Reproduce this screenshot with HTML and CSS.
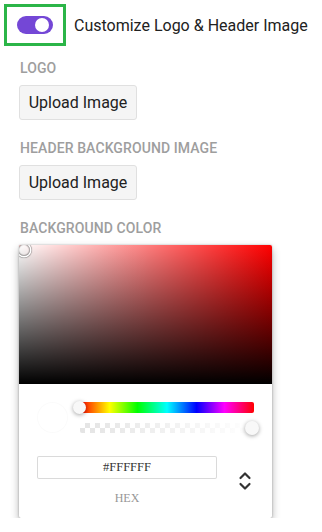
FILE: index.html
```html
<!DOCTYPE html>
<html lang="en">
<head>
    <meta charset="UTF-8">
    <meta name="viewport" content="width=device-width, initial-scale=1.0">
    <title>Customize Logo</title>
    <link rel="stylesheet" href="styles.css">
</head>
<body>
    <div class="header">
        <div class="toggle-box">
            <div class="switch"><span class="knob"></span></div>
        </div>
        <span class="title">Customize Logo &amp; Header Image</span>
    </div>

    <div class="section">
        <div class="label">Logo</div>
        <button class="upload">Upload Image</button>

        <div class="label">Header Background Image</div>
        <button class="upload">Upload Image</button>

        <div class="label">Background Color</div>

        <div class="picker">
            <div class="sat">
                <div class="sat-white"></div>
                <div class="sat-black"></div>
                <div class="sat-pointer"></div>
            </div>
            <div class="picker-body">
                <div class="controls">
                    <div class="swatch-wrap"><div class="swatch"></div></div>
                    <div class="sliders">
                        <div class="hue"><span class="slider-pointer hue-pointer"></span></div>
                        <div class="alpha"><span class="slider-pointer alpha-pointer"></span></div>
                    </div>
                </div>
                <div class="fields">
                    <div class="field">
                        <input class="hex-input" type="text" value="#FFFFFF">
                        <div class="hex-label">hex</div>
                    </div>
                    <div class="field-toggle">
                        <svg width="14" height="22" viewBox="0 0 14 22">
                            <path d="M2.5 8 L7 3.5 L11.5 8" fill="none" stroke="#333" stroke-width="2.2" stroke-linecap="round" stroke-linejoin="round"/>
                            <path d="M2.5 14 L7 18.5 L11.5 14" fill="none" stroke="#333" stroke-width="2.2" stroke-linecap="round" stroke-linejoin="round"/>
                        </svg>
                    </div>
                </div>
            </div>
        </div>
    </div>
</body>
</html>
```

FILE: styles.css
```css
body {
    margin: 0;
    font-family: Roboto, "Liberation Sans", sans-serif;
    background-color: #ffffff;
    color: #212121;
}
.header {
    display: flex;
    align-items: center;
    padding: 4px 0 0 4px;
}
.toggle-box {
    width: 62px;
    height: 42px;
    box-sizing: border-box;
    border: 3px solid #2bb548;
    display: flex;
    align-items: center;
    justify-content: center;
}
.switch {
    position: relative;
    width: 36px;
    height: 18px;
    border-radius: 9px;
    background-color: #7447d6;
}
.knob {
    position: absolute;
    top: 2px;
    right: 4px;
    width: 14px;
    height: 14px;
    border-radius: 50%;
    background-color: #ffffff;
}
.title {
    margin-left: 8px;
    font-size: 16px;
}
.section {
    padding-left: 19px;
}
.label {
    margin-top: 20px;
    margin-bottom: 9px;
    padding-left: 1px;
    font-size: 14px;
    line-height: 16px;
    font-weight: 500;
    color: #9e9e9e;
    text-transform: uppercase;
    letter-spacing: 0.1px;
}
.section > .label:first-child {
    margin-top: 14px;
}
.upload {
    display: block;
    width: 118px;
    height: 35px;
    padding: 0;
    font-family: Roboto, "Liberation Sans", sans-serif;
    font-size: 16px;
    color: #212121;
    background-color: #f5f5f5;
    border: 1px solid #e0e0e0;
    border-radius: 3px;
}
.picker {
    width: 253px;
    background-color: #ffffff;
    border-radius: 2px;
    box-shadow: rgba(0, 0, 0, 0.3) 0 0 2px, rgba(0, 0, 0, 0.3) 0 4px 8px;
    overflow: hidden;
}
.sat {
    position: relative;
    height: 139px;
    background-color: #ff0000;
}
.sat-white {
    position: absolute;
    inset: 0;
    background: linear-gradient(to right, #ffffff, rgba(255, 255, 255, 0));
}
.sat-black {
    position: absolute;
    inset: 0;
    background: linear-gradient(to top, #000000, rgba(0, 0, 0, 0));
}
.sat-pointer {
    position: absolute;
    top: -1px;
    left: -1px;
    width: 12px;
    height: 12px;
    border-radius: 50%;
    box-shadow: 0 0 0 1.5px #ffffff, inset 0 0 1px 1px rgba(0, 0, 0, 0.3), 0 0 1px 2px rgba(0, 0, 0, 0.4);
}
.picker-body {
    padding: 18px 18px 12px 18px;
}
.controls {
    display: flex;
    align-items: center;
}
.swatch-wrap {
    width: 43px;
}
.swatch {
    width: 31px;
    height: 31px;
    border-radius: 50%;
    background-color: #ffffff;
    box-shadow: inset 0 0 0 1px rgba(0, 0, 0, 0.02);
}
.sliders {
    flex: 1;
    display: flex;
    flex-direction: column;
    gap: 10px;
}
.hue, .alpha {
    position: relative;
    height: 11px;
    border-radius: 2px;
}
.hue {
    background: linear-gradient(to right, #f00 0%, #ff0 17%, #0f0 33%, #0ff 50%, #00f 67%, #f0f 83%, #f00 100%);
}
.alpha {
    height: 10px;
    background-color: #ffffff;
    background-image:
        linear-gradient(45deg, #e4e4e4 25%, transparent 25%, transparent 75%, #e4e4e4 75%),
        linear-gradient(45deg, #e4e4e4 25%, transparent 25%, transparent 75%, #e4e4e4 75%);
    background-size: 10px 10px;
    background-position: 0 0, 5px 5px;
}
.alpha::after {
    content: "";
    position: absolute;
    inset: 0;
    background: linear-gradient(to right, rgba(255, 255, 255, 0), #ffffff);
}
.slider-pointer {
    position: absolute;
    top: -1px;
    width: 13px;
    height: 13px;
    border-radius: 50%;
    background-color: #f8f8f8;
    box-shadow: rgba(0, 0, 0, 0.37) 0 1px 4px 0;
    z-index: 1;
}
.hue-pointer {
    left: -7px;
}
.alpha-pointer {
    left: calc(100% - 9px);
    top: -2px;
    width: 14px;
    height: 14px;
}
.fields {
    display: flex;
    align-items: flex-start;
    margin-top: 23px;
}
.field {
    width: 180px;
    text-align: center;
}
.hex-input {
    width: 180px;
    height: 23px;
    box-sizing: border-box;
    border: none;
    box-shadow: #dadada 0 0 0 1px inset;
    border-radius: 2px;
    font-family: "Liberation Serif", serif;
    font-size: 12.5px;
    color: #333333;
    text-align: center;
    padding: 0;
}
.hex-label {
    margin-top: 12px;
    font-family: "Liberation Serif", serif;
    font-size: 12px;
    color: #969696;
    text-transform: uppercase;
}
.field-toggle {
    margin-left: 21px;
    margin-top: 14px;
}
```
